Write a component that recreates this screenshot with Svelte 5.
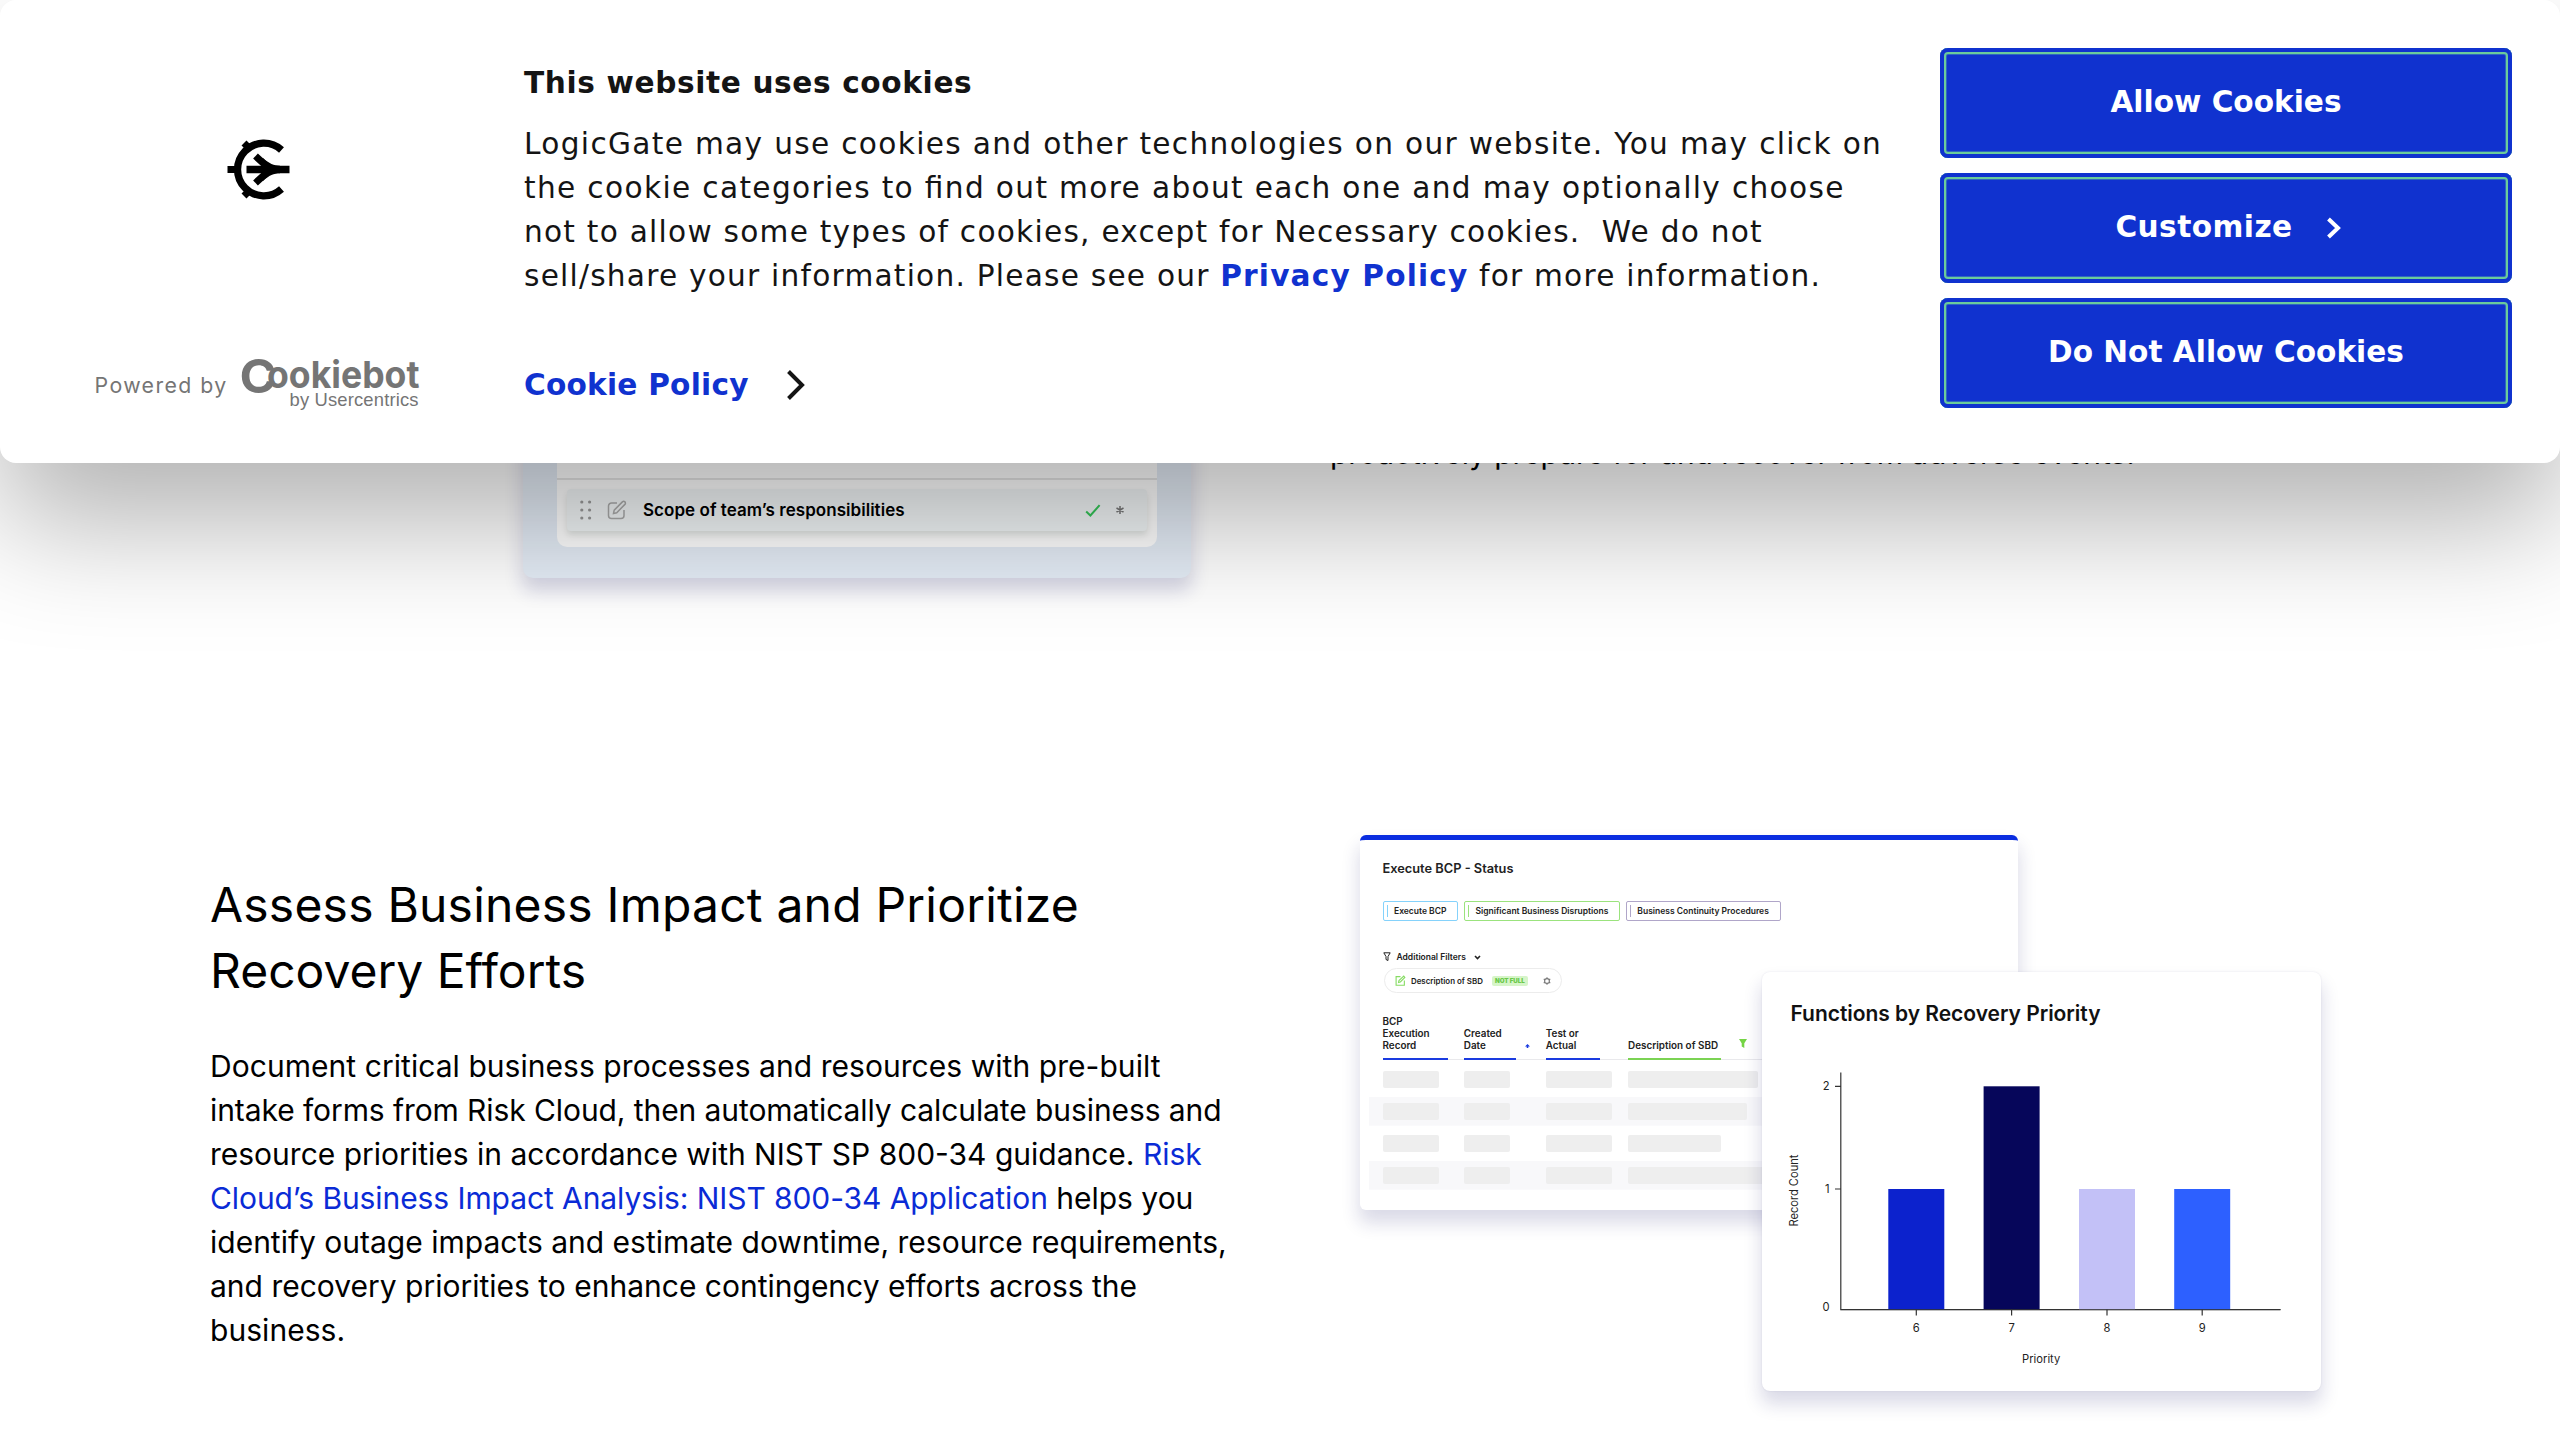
<script>
  const buttons = [
    { label: 'Allow Cookies', arrow: false },
    { label: 'Customize', arrow: true },
    { label: 'Do Not Allow Cookies', arrow: false },
  ];

  const pills = [
    { label: 'Execute BCP', tone: 'sky' },
    { label: 'Significant Business Disruptions', tone: 'green' },
    { label: 'Business Continuity Procedures', tone: 'violet' },
  ];

  // widths of the placeholder blocks, one list per table row
  const rows = [
    [56, 46, 66, 130],
    [56, 46, 66, 119],
    [56, 46, 66, 93],
    [56, 46, 66, 150],
  ];

  const bars = [
    { label: '6', value: 1, x: 126.3, top: 217, fill: '#0c22cd' },
    { label: '7', value: 2, x: 221.6, top: 114.3, fill: '#06065a' },
    { label: '8', value: 1, x: 317, top: 217, fill: '#c3c1f7' },
    { label: '9', value: 1, x: 412.2, top: 217, fill: '#2d60ff' },
  ];
  const baseline = 337.6;
</script>

<div class="page">
  <section class="feature first">
    <div class="shot">
      <div class="panel">
        <div class="item">
          <svg class="dots" viewBox="0 0 12 20" width="12" height="20">
            {#each [2, 10, 18] as y}
              <circle cx="1.8" cy={y} r="1.6" /><circle cx="9.6" cy={y} r="1.6" />
            {/each}
          </svg>
          <svg class="edit" viewBox="0 0 20 20" width="20" height="20">
            <path d="M10 3H4.5A3 3 0 0 0 1.500 6v9.500A3 3 0 0 0 4.500 18.500h9.500A3 3 0 0 0 17 15.500V10" />
            <path d="M6.500 13.500l.7-3.300L15.400 1.900a1.700 1.700 0 0 1 2.500 2.500L9.700 12.700z" />
          </svg>
          <span class="item-label">Scope of team’s responsibilities</span>
          <svg class="check" viewBox="0 0 16 13" width="16" height="13"><path d="M1.200 7.500l4.200 4L14.600 1.200" /></svg>
          <svg class="star" viewBox="0 0 10 10" width="10" height="10"><path d="M5 1v8M1.500 3l7 4M8.500 3l-7 4" /></svg>
        </div>
      </div>
    </div>
    <p class="copy lead">proactively prepare for and recover from adverse events.</p>
  </section>

  <section class="feature second">
    <div class="text">
      <h2><span class="wide">Assess Business Impact and Prioritize</span><br />Recovery Efforts</h2>
      <p class="copy">
        <span class="loose">Document critical business processes and resources with pre-built</span><br />
        <span class="tight">intake forms from Risk Cloud, then automatically calculate business and</span><br />
        resource priorities in accordance with NIST SP 800-34 guidance. <a href="#bia"
          >Risk<br /><span class="tight">Cloud’s Business Impact Analysis: NIST 800-34 Application</span></a
        > helps you<br />
        identify outage impacts and estimate downtime, resource requirements,<br />
        and recovery priorities to enhance contingency efforts across the<br />
        <span class="loose">business.</span>
      </p>
    </div>

    <div class="visual">
      <div class="status">
        <div class="status-title">Execute BCP - Status</div>
        <div class="pills">
          {#each pills as pill}
            <span class="pill {pill.tone}">{pill.label}</span>
          {/each}
        </div>
        <div class="filters">
          <svg viewBox="0 0 8 10" width="8" height="10"><path d="M.8.8h6.400L5 4.500V8.500L3 7.500v-3z" /></svg>
          <span>Additional Filters</span>
          <svg viewBox="0 0 7 5" width="7" height="5"><path d="M1 1l2.500 2.500L6 1" stroke-width="1.600" /></svg>
        </div>
        <div class="chip">
          <svg class="chip-edit" viewBox="0 0 20 20" width="11" height="11">
            <path d="M10 3H2v15.500h15V10" /><path d="M6.500 13.500l.7-3.300L15.900 1.900l2 2.500L9.700 12.700z" />
          </svg>
          <span>Description of SBD</span>
          <b>NOT FULL</b>
          <svg class="gear" viewBox="0 0 10 10" width="8" height="8">
            <circle cx="5" cy="5" r="3" /><path d="M5 .2v2M5 7.800v2M.9 2.600l1.500.9M7.600 6.500l1.500.9M.9 7.400l1.500-.9M7.600 3.500l1.500-.9" />
          </svg>
        </div>
        <div class="head">
          <div class="cell"><span class="name w1">BCP<br />Execution<br />Record</span></div>
          <div class="cell">
            <span class="name w2">Created<br />Date</span>
            <svg class="sort" viewBox="0 0 5 4" width="5" height="4"><path d="M2.500 0L5 2.500H3.300V4H1.700V2.500H0z" /></svg>
          </div>
          <div class="cell"><span class="name w3">Test or<br />Actual</span></div>
          <div class="cell">
            <span class="name w4">Description of SBD</span>
            <svg class="funnel" viewBox="0 0 8 9" width="8" height="9"><path d="M0 0h8L5.300 4.200V9L2.700 7.500V4.200z" /></svg>
          </div>
        </div>
        {#each rows as row}
          <div class="row">
            {#each row as width}
              <span class="cell"><i style="width: {width}px"></i></span>
            {/each}
          </div>
        {/each}
      </div>

      <div class="chart">
        <svg viewBox="0 0 559 419" width="559" height="419">
          <text class="chart-title" x="28.500" y="49.300" textLength="310">Functions by Recovery Priority</text>
          <text class="axis" transform="translate(36.300 254.500) rotate(-90)" textLength="72">Record Count</text>
          <path class="line" d="M78.800 100.500V337.600H518.500M73 114.300h5.800M73 217h5.800" />
          <text class="axis" x="67.500" y="118.300" text-anchor="end">2</text>
          <text class="axis" x="67.500" y="221" text-anchor="end">1</text>
          <text class="axis" x="67.500" y="339" text-anchor="end">0</text>
          {#each bars as bar}
            <rect x={bar.x} y={bar.top} width="56" height={baseline - bar.top} fill={bar.fill} />
            <path class="line" d="M{bar.x + 28} {baseline}v5.800" />
            <text class="axis" x={bar.x + 28} y="360" text-anchor="middle">{bar.label}</text>
          {/each}
          <path class="line thin" d="M78.800 337.600H518.500" />
          <text class="axis" x="279.200" y="391" text-anchor="middle">Priority</text>
        </svg>
      </div>
    </div>
  </section>
</div>

<div class="dialog">
  <div class="brand">
    <svg class="logo" viewBox="0 0 70 70" width="70" height="70">
      <path d="M53.500 16A26.300 26.300 0 1 0 53.500 55" />
      <path d="M-.5 35.500h9M16 9l5 5M16 62l5-5" stroke-width="7" />
      <path d="M18.500 35.500H61.500" stroke-width="7.600" />
      <path d="M27.500 22L40 33.500M27.500 49L40 37.500" stroke-width="7" />
      <path class="solid" d="M35 24c6 5.500 11 7.700 17 7.700v7.600c-6 0-11 2.200-17 7.700l-4-4 6-7.500-6-7.500z" />
    </svg>
    <div class="powered">
      <span>Powered by</span>
      <svg viewBox="-4 -6 190 64" width="190" height="64">
        <text class="wm-c" x="-2.500" y="34.300" textLength="37" lengthAdjust="spacingAndGlyphs">C</text>
        <text class="wm" x="25" y="28.500" textLength="152.500" lengthAdjust="spacingAndGlyphs">ookiebot</text>
        <text class="wm-sub" x="47.500" y="47" textLength="129">by Usercentrics</text>
      </svg>
    </div>
  </div>

  <div class="message">
    <h3>This website uses cookies</h3>
    <p>
      LogicGate may use cookies and other technologies on our website. You may click on<br />
      <span class="l2">the cookie categories to find out more about each one and may optionally choose</span><br />
      <span class="l3">not to allow some types of cookies, except for Necessary cookies.&nbsp; We do not</span><br />
      <span class="l4">sell/share your information. Please see our <a href="#privacy">Privacy Policy</a> for more information.</span>
    </p>
    <a class="policy" href="#policy">
      Cookie Policy
      <svg viewBox="0 0 20 32" width="20" height="32"><path d="M2.500 2.500L16 16 2.500 29.500" /></svg>
    </a>
  </div>

  <div class="actions">
    {#each buttons as button}
      <button class:spaced={button.arrow}>
        {button.label}
        {#if button.arrow}
          <svg viewBox="0 0 16 22" width="16" height="22"><path d="M2.500 2L12 11 2.500 20" /></svg>
        {/if}
      </button>
    {/each}
  </div>
</div>

<style>
  :global(body) {
    margin: 0;
    background: #fff;
    overflow: hidden;
  }
  .page {
    height: 1440px;
    overflow: hidden;
    font-family: Inter, sans-serif;
    color: #000;
  }
  .feature {
    display: flex;
  }
  a {
    text-decoration: none;
  }

  /* first feature */
  .first {
    height: 578px;
    padding-left: 523px;
    align-items: flex-end;
    gap: 139px;
  }
  .shot {
    box-sizing: border-box;
    width: 668px;
    height: 330px;
    padding: 0 34px 31px;
    display: flex;
    border-radius: 10px;
    background: #e5edf7;
    box-shadow: 0 12px 18px 1px rgba(25, 25, 105, 0.17);
  }
  .panel {
    flex: 1;
    display: flex;
    flex-direction: column;
    justify-content: flex-end;
    padding: 0 10px 16px;
    border-radius: 0 0 10px 10px;
    background: linear-gradient(#e6e6e6, #e6e6e6) 0 230px / 100% 2px no-repeat #fff;
  }
  .item {
    display: flex;
    align-items: center;
    height: 42px;
    padding: 0 22px 0 13px;
    border-radius: 4px;
    background: #f3f7f8;
    box-shadow: 0 4px 6px rgba(0, 30, 20, 0.12);
  }
  .dots {
    fill: #9a9a9a;
  }
  .edit {
    margin-left: 15px;
    fill: none;
    stroke: #ababab;
    stroke-width: 1.500;
  }
  .item-label {
    flex: 1;
    margin-left: 16px;
    font-size: 17px;
    font-weight: 600;
    letter-spacing: 0.040px;
  }
  .check {
    fill: none;
    stroke: #35c759;
    stroke-width: 2;
  }
  .star {
    margin-left: 14px;
    stroke: #777;
    stroke-width: 1.500;
  }
  .lead {
    margin: 0 0 103px;
    letter-spacing: -0.070px;
  }

  /* second feature */
  .copy {
    font-size: 30px;
    line-height: 44px;
  }
  .second {
    padding: 257px 0 0 210px;
  }
  .text {
    width: 1030px;
    margin-right: 120px;
    padding-top: 37px;
    white-space: nowrap;
  }
  h2 {
    margin: 0 0 40px;
    font-size: 48px;
    line-height: 66px;
    font-weight: 400;
  }
  .wide {
    letter-spacing: 0.210px;
  }
  .loose {
    letter-spacing: 0.050px;
  }
  .tight {
    letter-spacing: -0.085px;
  }
  .text .copy {
    margin: 0;
  }
  .copy a {
    color: #0a2bd6;
  }

  .visual {
    position: relative;
    width: 961px;
    height: 556px;
  }
  .status {
    box-sizing: border-box;
    width: 658px;
    height: 375px;
    padding: 18.500px 9px 0;
    border-top: 5px solid #0a2de0;
    border-radius: 6px;
    background: #fff;
    box-shadow: 0 12px 18px 1px rgba(25, 25, 105, 0.16);
    color: #222;
    font-weight: 600;
  }
  .status-title,
  .pills,
  .filters,
  .chip,
  .head,
  .row {
    padding-left: 13.500px;
  }
  .status-title {
    font-size: 12.800px;
    line-height: 20px;
  }
  .pills {
    display: flex;
    gap: 5.500px;
    margin-top: 22.500px;
  }
  .pill {
    box-sizing: border-box;
    height: 20px;
    padding: 0 11px 0 10.500px;
    border: 1px solid;
    border-radius: 2px;
    font-size: 8.500px;
    line-height: 18px;
    background: linear-gradient(var(--tone), var(--tone)) 3px 3px / 1px 12px no-repeat;
    border-color: var(--tone);
  }
  .sky {
    --tone: #85d2fb;
  }
  .green {
    --tone: #9be37d;
  }
  .violet {
    --tone: #b0a6c9;
  }
  .filters {
    display: flex;
    align-items: center;
    height: 14px;
    margin-top: 29px;
    font-size: 8.500px;
  }
  .filters svg {
    fill: none;
    stroke: #222;
  }
  .filters span {
    margin: 0 8px 0 6px;
  }
  .chip {
    box-sizing: border-box;
    display: flex;
    align-items: center;
    width: 178px;
    height: 25px;
    margin: 4px 0 0 15px;
    padding-left: 10px;
    border: 1px solid #ececec;
    border-radius: 13px;
    font-size: 7.900px;
  }
  .chip span {
    margin: 0 9px 0 5px;
  }
  .chip b {
    width: 36px;
    border-radius: 2px;
    background: #d6f5c8;
    color: #6bc94a;
    font-size: 6.200px;
    line-height: 10px;
    text-align: center;
  }
  .chip-edit {
    fill: none;
    stroke: #86dc63;
    stroke-width: 2;
  }
  .gear {
    margin-left: 15px;
    fill: none;
    stroke: #777;
    stroke-width: 1.400;
  }
  .head,
  .row {
    display: grid;
    grid-template-columns: 81.300px 82px 82.300px 1fr;
  }
  .head {
    height: 45px;
    margin: 22px 0 3px;
    font-size: 9.900px;
    line-height: 12.100px;
    background: linear-gradient(#e9e9ec, #e9e9ec) 13.500px 43.500px / 100% 1px no-repeat;
  }
  .head .cell {
    display: flex;
    align-items: flex-end;
  }
  .name {
    padding-bottom: 6.500px;
    border-bottom: 2px solid #1a3be0;
    white-space: nowrap;
  }
  .w1 {
    width: 65px;
  }
  .w2 {
    width: 52px;
  }
  .w3 {
    width: 54.500px;
  }
  .w4 {
    width: 92.500px;
    border-color: #7bd353;
  }
  .sort {
    margin: 0 0 12.500px 9px;
    fill: #1a3be0;
  }
  .funnel {
    margin: 0 0 12px 18px;
    fill: #74d444;
  }
  .row {
    height: 32.100px;
    align-items: center;
    background: #fff;
  }
  .row:nth-child(odd) {
    background: linear-gradient(#f8f8fa, #f8f8fa) 0 1.700px / 100% 28.700px no-repeat;
  }
  .row i {
    display: block;
    height: 17px;
    border-radius: 2px;
    background: #eee;
  }

  .chart {
    position: absolute;
    left: 402px;
    top: 137px;
    height: 419px;
    border-radius: 8px;
    background: #fff;
    box-shadow:
      0 12px 18px 1px rgba(25, 25, 105, 0.16),
      0 0 2px rgba(20, 20, 90, 0.1);
  }
  .chart svg {
    display: block;
  }
  .chart-title {
    font-size: 21px;
    font-weight: 600;
    fill: #111;
  }
  .axis {
    font-size: 11.200px;
    fill: #222;
  }
  .line {
    fill: none;
    stroke: #333;
    stroke-width: 1.200;
  }
  .thin {
    stroke-width: 0.800;
  }

  /* cookie dialog */
  .dialog {
    position: absolute;
    inset: 0 0 auto 0;
    box-sizing: border-box;
    display: flex;
    height: 463px;
    padding: 48px 48px 0 94.500px;
    border-radius: 16px;
    background: #fff;
    box-shadow: 0 60px 122px rgba(0, 0, 0, 0.3);
    color: #141414;
    font-family: 'DejaVu Sans', sans-serif;
    font-size: 29.600px;
    line-height: 44px;
  }
  .brand {
    display: flex;
    flex-direction: column;
    width: 429.500px;
  }
  .logo {
    margin: 85.500px 0 0 133px;
    overflow: visible;
    fill: none;
    stroke: #000;
    stroke-width: 7.300;
  }
  .logo .solid {
    fill: #000;
    stroke: none;
  }
  .powered {
    display: flex;
    margin-top: 149.500px;
    color: #757575;
    fill: #757575;
    font-family: Inter, sans-serif;
    font-size: 21.300px;
    letter-spacing: 1.400px;
  }
  .powered span {
    width: 143.500px;
    padding-top: 10px;
    white-space: nowrap;
  }
  .powered svg {
    letter-spacing: 0;
    overflow: visible;
  }
  .wm-c {
    font-size: 46.500px;
    font-weight: 700;
  }
  .wm {
    font-size: 37.500px;
    font-weight: 700;
  }
  .wm-sub {
    font-family: 'Liberation Sans', sans-serif;
    font-size: 18.400px;
  }
  .message {
    width: 1416px;
    padding-top: 13px;
    white-space: nowrap;
  }
  .message a {
    color: #1032cf;
    font-weight: 700;
  }
  h3 {
    margin: 0 0 17px;
    font-size: 29.600px;
    line-height: 44px;
    letter-spacing: 0.630px;
  }
  .message p {
    margin: 0 0 65px;
    letter-spacing: 1.330px;
    font-feature-settings: 'liga' 1;
  }
  .message .l2 {
    letter-spacing: 1.350px;
  }
  .message .l3 {
    letter-spacing: 1.250px;
  }
  .message .l4 {
    letter-spacing: 1.230px;
  }
  .message .l4 a {
    letter-spacing: 1.150px;
  }
  .policy {
    display: flex;
    align-items: center;
    gap: 37px;
    letter-spacing: 0.230px;
  }
  .policy svg,
  button svg {
    fill: none;
    stroke: #141414;
    stroke-width: 4;
  }
  .actions {
    display: flex;
    flex-direction: column;
    gap: 15px;
    width: 572px;
  }
  button {
    display: flex;
    align-items: center;
    justify-content: center;
    gap: 33px;
    height: 110px;
    padding: 0 0 3px;
    border: 0;
    border-radius: 8px;
    background: #1032cf;
    box-shadow:
      inset 0 0 0 4px #1032cf,
      inset 0 0 0 6px #6bcb9b,
      inset 0 0 0 7px #3067bf;
    color: #fff;
    font: 700 29.600px/44px 'DejaVu Sans', sans-serif;
  }
  .spaced {
    padding-left: 5px;
    letter-spacing: 0.450px;
  }
  button svg {
    stroke: #fff;
    margin-top: 3px;
  }
</style>
